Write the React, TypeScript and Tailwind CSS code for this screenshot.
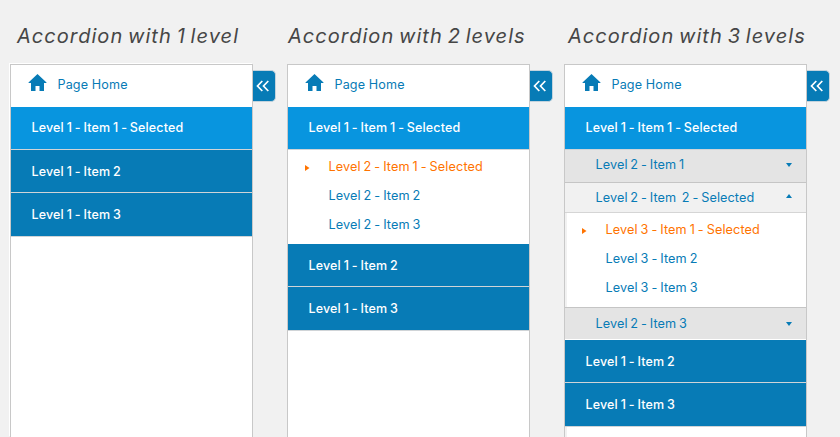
import type { ReactNode } from "react";

function Panel({ title, titleClass, boxClass = "", children }: { title: string; titleClass: string; boxClass?: string; children: ReactNode }) {
  return (
    <section className="w-[277px] shrink-0">
      <h2 className={"h-16 whitespace-nowrap pt-[20px] text-[20px] leading-8 tracking-[1.05px] [word-spacing:-1.9px] italic text-[#464646] " + titleClass}>{title}</h2>
      <div className="flex items-start">
        <div className={"h-[373px] w-[243px] shrink-0 border border-b-0 border-[#c8c8c8] bg-white " + boxClass}>
          <div className="flex h-[42px] items-center pl-[17px] pb-[2px]">
            <svg width="19" height="17" viewBox="0 0 19 17" className="mb-[5px] shrink-0" fill="#077bb6">
              <path d="M9.500 0L18.500 8.500V9H16V17H11.500V12H7.500V17H3V9H.5V8.500Z" />
            </svg>
            <span className="ml-[10.5px] text-[12.6px] tracking-[0.13px] text-[#077bb6]">Page Home</span>
          </div>
          {children}
        </div>
        <button aria-label="Collapse" className="mt-1.5 flex h-8 w-[23px] items-center justify-center rounded-r-[5px] border border-l-0 border-[#c3d3dd] bg-[#077bb6] pr-[2px]">
          <svg width="14" height="12" viewBox="0 0 14 12" fill="none" stroke="white" strokeWidth="1.7">
            <path d="M6.300 1L1.500 6l4.800 5M12.300 1L7.500 6l4.800 5" />
          </svg>
        </button>
      </div>
    </section>
  );
}

function Level1({ text, selected, end }: { text: string; selected?: boolean; end?: boolean }) {
  return (
    <div className={"flex items-center whitespace-nowrap border-b border-[#d0d4d7] pl-[20.5px] text-[12.5px] font-medium tracking-[0.15px] [word-spacing:-0.7px] text-white " + (end ? "h-11 pt-px " : "h-[43px] ") + (selected ? "bg-[#0895df]" : "bg-[#077bb6] pt-[2px]")}>
      {text}
    </div>
  );
}

function Leaf({ text, selected }: { text: string; selected?: boolean }) {
  return (
    <div className={"flex h-[29px] items-center whitespace-nowrap pl-[17px] text-[12.7px] tracking-[0.11px] [word-spacing:-0.8px] " + (selected ? "text-[#ff7300]" : "text-[#077bb6]")}>
      <svg width="5" height="6" viewBox="0 0 5 6" className="mt-[2px] mr-[18.5px] shrink-0" fill={selected ? "#ff7300" : "none"}>
        <path d="M0 0L4.500 3L0 6Z" />
      </svg>
      {text}
    </div>
  );
}

function Level2({ text, className, open }: { text: string; className: string; open?: boolean }) {
  return (
    <div className={"flex items-center justify-between whitespace-pre pr-3.5 pl-[30.5px] text-[12.7px] tracking-[0.07px] [word-spacing:-0.8px] text-[#077bb6] " + className}>
      {text}
      <svg width="6" height="4" viewBox="0 0 6 4" fill="#077bb6" className={open ? "mb-[3px]" : "mb-0"}>
        <path d={open ? "M0 4L3 0L6 4Z" : "M0 0H6L3 4Z"} />
      </svg>
    </div>
  );
}

export default function App() {
  return (
    <main className="flex h-[437px] w-[840px] overflow-hidden bg-[#f1f1f1] pl-[10px] font-['Inter',sans-serif]">
      <Panel title="Accordion with 1 level" titleClass="pl-[7px]" boxClass="shadow-[-1px_-1px_0_white]">
        <Level1 text="Level 1 - Item 1 - Selected" selected />
        <Level1 text="Level 1 - Item 2" />
        <Level1 text="Level 1 - Item 3" end />
      </Panel>
      <Panel title="Accordion with 2 levels" titleClass="pl-[1px]">
        <Level1 text="Level 1 - Item 1 - Selected" selected />
        <div className="h-[94px] pt-[2px]">
          <Leaf text="Level 2 - Item 1 - Selected" selected />
          <Leaf text="Level 2 - Item 2" />
          <Leaf text="Level 2 - Item 3" />
        </div>
        <Level1 text="Level 1 - Item 2" />
        <Level1 text="Level 1 - Item 3" end />
      </Panel>
      <Panel title="Accordion with 3 levels" titleClass="pl-[4px]">
        <Level1 text="Level 1 - Item 1 - Selected" selected />
        <Level2 text="Level 2 - Item 1" className="h-[33px] border-b border-[#c5c5c5] bg-[#e4e4e4] pb-[2px]" />
        <Level2 text="Level 2 - Item  2 - Selected" open className="h-[30px] border-b border-[#d5d5d5] bg-[#f1f1f1]" />
        <div className="h-[94px] bg-linear-to-r from-[#f1f1f1] from-[2px] to-white to-[2px] pt-[2px]">
          <Leaf text="Level 3 - Item 1 - Selected" selected />
          <Leaf text="Level 3 - Item 2" />
          <Leaf text="Level 3 - Item 3" />
        </div>
        <Level2 text="Level 2 - Item 3" className="h-[33px] border-t border-b border-t-[#c5c5c5] border-b-white bg-[#e4e4e4]" />
        <Level1 text="Level 1 - Item 2" />
        <Level1 text="Level 1 - Item 3" end />
        <div className="h-[10px] border-l-2 border-[#f1f1f1]" />
      </Panel>
    </main>
  );
}
